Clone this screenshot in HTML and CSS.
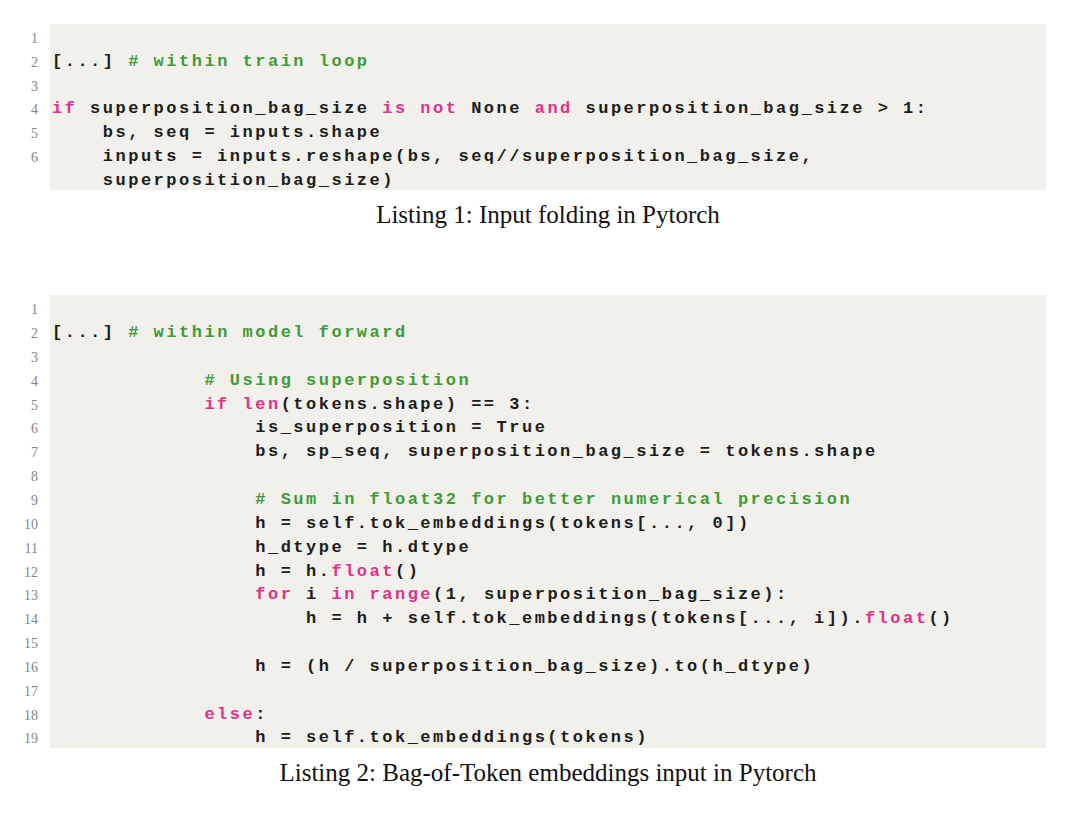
FILE: index.html
```html
<!DOCTYPE html>
<html>
<head>
<meta charset="utf-8">
<link rel="stylesheet" href="styles.css">
</head>
<body>
<div class="page">
  <figure class="listing">
    <div class="code-block b1">
      <div class="row"><span class="ln">1</span><span class="code"></span></div>
      <div class="row"><span class="ln">2</span><span class="code">[...] <span class="c"># within train loop</span></span></div>
      <div class="row"><span class="ln">3</span><span class="code"></span></div>
      <div class="row"><span class="ln">4</span><span class="code"><span class="k">if</span> superposition_bag_size <span class="k">is</span> <span class="k">not</span> None <span class="k">and</span> superposition_bag_size &gt; 1:</span></div>
      <div class="row"><span class="ln">5</span><span class="code">    bs, seq = inputs.shape</span></div>
      <div class="row"><span class="ln">6</span><span class="code">    inputs = inputs.reshape(bs, seq//superposition_bag_size,</span></div>
      <div class="row"><span class="ln"></span><span class="code">    superposition_bag_size)</span></div>
    </div>
    <figcaption class="caption cap1">Listing 1: Input folding in Pytorch</figcaption>
  </figure>

  <figure class="listing">
    <div class="code-block b2">
      <div class="row"><span class="ln">1</span><span class="code"></span></div>
      <div class="row"><span class="ln">2</span><span class="code">[...] <span class="c"># within model forward</span></span></div>
      <div class="row"><span class="ln">3</span><span class="code"></span></div>
      <div class="row"><span class="ln">4</span><span class="code">            <span class="c"># Using superposition</span></span></div>
      <div class="row"><span class="ln">5</span><span class="code">            <span class="k">if</span> <span class="k">len</span>(tokens.shape) == 3:</span></div>
      <div class="row"><span class="ln">6</span><span class="code">                is_superposition = True</span></div>
      <div class="row"><span class="ln">7</span><span class="code">                bs, sp_seq, superposition_bag_size = tokens.shape</span></div>
      <div class="row"><span class="ln">8</span><span class="code"></span></div>
      <div class="row"><span class="ln">9</span><span class="code">                <span class="c"># Sum in float32 for better numerical precision</span></span></div>
      <div class="row"><span class="ln">10</span><span class="code">                h = self.tok_embeddings(tokens[..., 0])</span></div>
      <div class="row"><span class="ln">11</span><span class="code">                h_dtype = h.dtype</span></div>
      <div class="row"><span class="ln">12</span><span class="code">                h = h.<span class="k">float</span>()</span></div>
      <div class="row"><span class="ln">13</span><span class="code">                <span class="k">for</span> i <span class="k">in</span> <span class="k">range</span>(1, superposition_bag_size):</span></div>
      <div class="row"><span class="ln">14</span><span class="code">                    h = h + self.tok_embeddings(tokens[..., i]).<span class="k">float</span>()</span></div>
      <div class="row"><span class="ln">15</span><span class="code"></span></div>
      <div class="row"><span class="ln">16</span><span class="code">                h = (h / superposition_bag_size).to(h_dtype)</span></div>
      <div class="row"><span class="ln">17</span><span class="code"></span></div>
      <div class="row"><span class="ln">18</span><span class="code">            <span class="k">else</span>:</span></div>
      <div class="row"><span class="ln">19</span><span class="code">                h = self.tok_embeddings(tokens)</span></div>
    </div>
    <figcaption class="caption cap2">Listing 2: Bag-of-Token embeddings input in Pytorch</figcaption>
  </figure>
</div>
</body>
</html>
```

FILE: styles.css
```css
html, body {
  margin: 0;
  padding: 0;
  background: #ffffff;
}

.page {
  width: 1080px;
  padding-top: 24px;
  display: flex;
  flex-direction: column;
}

.listing {
  margin: 0;
  display: flex;
  flex-direction: column;
}

.code-block {
  display: flex;
  flex-direction: column;
}

.row {
  display: grid;
  grid-template-columns: 50px 996px;
  height: 23.75px;
  overflow: hidden;
}

.b2 .row {
  height: 23.85px;
}

.ln {
  font-family: "Liberation Serif", "Times New Roman", serif;
  font-size: 14px;
  color: #858585;
  text-align: right;
  padding-right: 12px;
  line-height: 29px;
}

.code {
  background: #f1f0eb;
  font-family: "Liberation Mono", "Courier New", monospace;
  font-weight: bold;
  font-size: 17px;
  letter-spacing: 2.5px;
  color: #1c1c1c;
  white-space: pre;
  line-height: 27px;
  padding-left: 2px;
}

.k {
  color: #e0308a;
}

.c {
  color: #3f9b36;
}

.caption {
  font-family: "Liberation Serif", "Times New Roman", serif;
  font-size: 25px;
  color: #111111;
  text-align: center;
  width: 1096px;
  line-height: 30px;
  margin-top: 10px;
}

.cap1 {
  margin-bottom: 65px;
}
```
